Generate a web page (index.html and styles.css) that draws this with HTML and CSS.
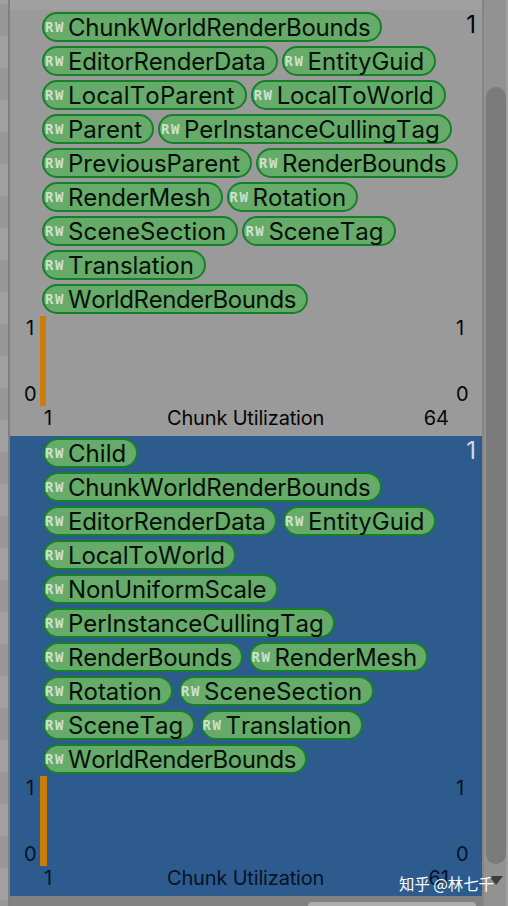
FILE: index.html
```html
<!DOCTYPE html>
<html lang="en">
<head>
<meta charset="utf-8">
<title>Archetypes</title>
<link rel="stylesheet" href="styles.css">
</head>
<body>
<div class="window">
  <div class="stripes"></div>
  <main class="list">
    <section class="chunk">
      <div class="count">1</div>
      <div class="tags">
        <span class="tag tight"><i>RW</i>ChunkWorldRenderBounds</span>
        <span class="tag snug"><i>RW</i>EditorRenderData</span>
        <span class="tag near"><i>RW</i>EntityGuid</span>
        <span class="tag"><i>RW</i>LocalToParent</span>
        <span class="tag snug"><i>RW</i>LocalToWorld</span>
        <span class="tag near"><i>RW</i>Parent</span>
        <span class="tag close"><i>RW</i>PerInstanceCullingTag</span>
        <span class="tag close"><i>RW</i>PreviousParent</span>
        <span class="tag tight"><i>RW</i>RenderBounds</span>
        <span class="tag snug"><i>RW</i>RenderMesh</span>
        <span class="tag near"><i>RW</i>Rotation</span>
        <span class="tag"><i>RW</i>SceneSection</span>
        <span class="tag near"><i>RW</i>SceneTag</span>
        <span class="tag close"><i>RW</i>Translation</span>
        <span class="tag tightest"><i>RW</i>WorldRenderBounds</span>
      </div>
      <div class="plot">
        <div class="scale"><span class="one">1</span><span>0</span></div>
        <div class="bar"></div>
        <div class="scale right"><span>1</span><span>0</span></div>
      </div>
      <div class="axis"><span>1</span><span class="label">Chunk Utilization</span><span>64</span></div>
    </section>
    <section class="chunk selected">
      <div class="count">1</div>
      <div class="tags">
        <span class="tag near"><i>RW</i>Child</span>
        <span class="tag tight"><i>RW</i>ChunkWorldRenderBounds</span>
        <span class="tag snug"><i>RW</i>EditorRenderData</span>
        <span class="tag near"><i>RW</i>EntityGuid</span>
        <span class="tag snug"><i>RW</i>LocalToWorld</span>
        <span class="tag snug"><i>RW</i>NonUniformScale</span>
        <span class="tag close"><i>RW</i>PerInstanceCullingTag</span>
        <span class="tag tight"><i>RW</i>RenderBounds</span>
        <span class="tag snug"><i>RW</i>RenderMesh</span>
        <span class="tag near"><i>RW</i>Rotation</span>
        <span class="tag"><i>RW</i>SceneSection</span>
        <span class="tag near"><i>RW</i>SceneTag</span>
        <span class="tag close"><i>RW</i>Translation</span>
        <span class="tag tightest"><i>RW</i>WorldRenderBounds</span>
      </div>
      <div class="plot">
        <div class="scale"><span class="one">1</span><span>0</span></div>
        <div class="bar"></div>
        <div class="scale right"><span>1</span><span>0</span></div>
      </div>
      <div class="axis"><span>1</span><span class="label">Chunk Utilization</span><span>61</span></div>
    </section>
    <footer class="footer"><div class="field"></div></footer>
  </main>
  <div class="scrollbar">
    <div class="thumb"></div>
    <svg class="arrow" width="14" height="9" viewBox="0 0 14 9"><path d="M0 0H14L7 9Z" fill="#3d3d3d"/></svg>
  </div>
  <div class="watermark">知乎 @林七千</div>
</div>
</body>
</html>
```
FILE: styles.css
```css
* { box-sizing: border-box; }
body { margin: 0; background: #9a9a9a; font-family: Inter, "Liberation Sans", sans-serif; font-kerning: none; color: #050505; }
.window { position: relative; display: flex; width: 508px; height: 906px; overflow: hidden; }
.stripes { width: 10px; border-right: 2px solid #808080; background: repeating-linear-gradient(#a1a1a1 0 32px, #979797 32px 64px) 0 -28px / 100% 1024px; }
.list { width: 472px; padding-top: 10px; background: linear-gradient(#a0a0a0 10px, #9a9a9a 10px); }
.chunk { position: relative; padding-top: 2px; background: #9a9a9a; }
.chunk:first-child { height: 426px; }
.selected { height: 460px; background: #2d5b8e; }
.count { position: absolute; right: 6px; top: 0; font-size: 24px; line-height: 30px; }
.selected .count { color: #c9d9ec; }
.tags { display: flex; flex-wrap: wrap; gap: 4px; width: 424px; margin-left: 32px; }
.tag { display: flex; height: 30px; padding: 0 10px 0 1px; border: 2px solid #148028; border-radius: 15px; background: #66ab6a; font-size: 24px; line-height: 27px; letter-spacing: .15px; white-space: nowrap; color: #061006; }
.near { letter-spacing: .03px; }
.close { letter-spacing: -.05px; }
.snug { letter-spacing: -.13px; }
.tight { letter-spacing: -.26px; }
.tightest { letter-spacing: -.4px; }
.tag i { width: 23px; font: bold 14px/27px "DejaVu Sans Mono", monospace; letter-spacing: 1.5px; color: #cfe0cf; }
.selected .tags { margin-left: 33px; width: 423px; column-gap: 6px; }
.selected .tag { padding-right: 9.4px; }
.selected .tag i { width: 22px; margin-left: -1px; margin-right: 1px; }
.plot { display: flex; height: 90px; margin-top: 2px; }
.scale { display: flex; flex-direction: column; justify-content: space-between; width: 30px; padding-left: 14px; font-size: 20px; line-height: 24px; }
.one { padding-left: 2px; }
.bar { width: 6px; background: #ca7d0a; }
.selected .bar { width: 7px; }
.scale.right { margin-left: auto; width: 26px; padding-left: 0; }
.axis { display: flex; padding: 0 33px 0 34px; font-size: 20px; line-height: 24px; }
.axis .label { margin: 0 auto 0 114px; letter-spacing: -.17px; }
.axis span:first-child { width: 9px; }
.selected .scale, .selected .axis { color: #061226; }
.footer { height: 10px; padding: 6px 6px 0 298px; background: #828282; }
.field { height: 4px; border-radius: 4px 4px 0 0; background: #adadad; }
.scrollbar { display: flex; flex-direction: column; align-items: center; width: 26px; padding: 87px 2px 0 3px; border-left: 2px solid #858585; border-right: 2px solid #a0a0a0; background: #929292; }
.thumb { width: 20px; height: 777px; border-radius: 10px; background: #7b7b7b; flex: none; }
.arrow { margin-top: 12px; flex: none; }
.watermark { position: absolute; left: 399px; top: 873px; font: 15.4px/20px "Noto Sans CJK SC", sans-serif; color: #fff; white-space: nowrap; }
```
